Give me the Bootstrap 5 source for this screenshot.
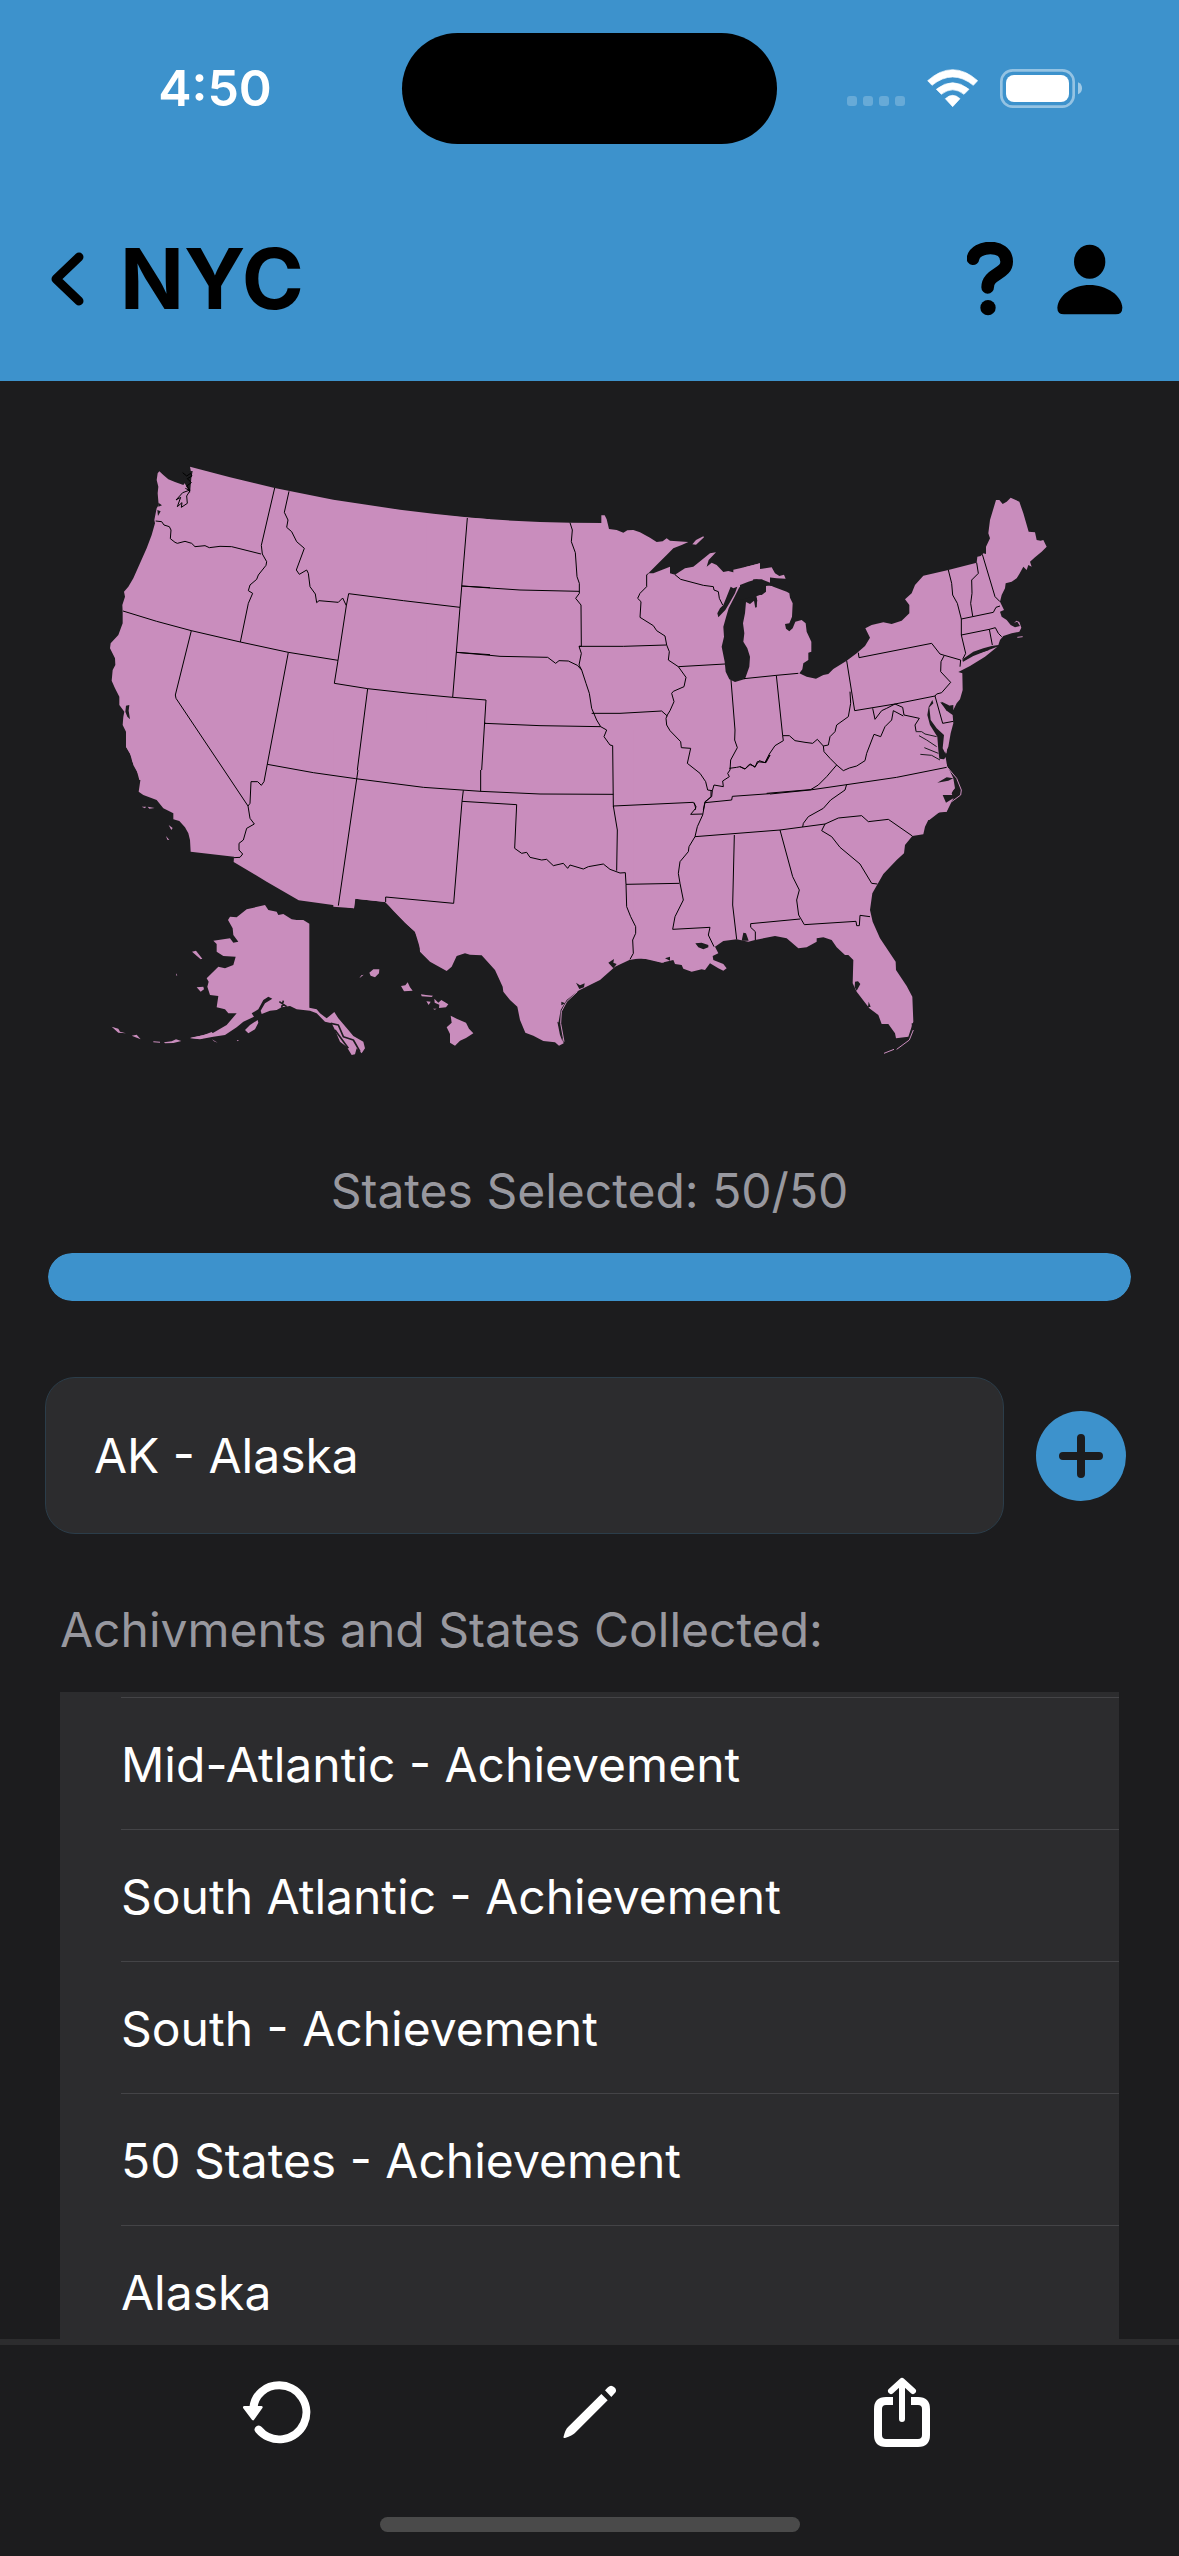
<!DOCTYPE html>
<html lang="en">
<head>
<meta charset="utf-8">
<meta name="viewport" content="width=device-width, initial-scale=1">
<title>NYC</title>
<link href="https://cdn.jsdelivr.net/npm/bootstrap@5.3.0/dist/css/bootstrap.min.css" rel="stylesheet">
<script src="https://cdn.jsdelivr.net/npm/bootstrap@5.3.0/dist/js/bootstrap.bundle.min.js"></script>
<style>
  :root { --sky: #3d92cc; --ink: #1c1c1e; --panel: #2c2c2e; --dim: #98989f; --state: #c98dbd; }
  body { background: var(--ink); color: #fff; font-family: Inter, Roboto, sans-serif; font-size: 48px; line-height: 60px; }
  .app-head { background: var(--sky); }
  .status-row { height: 176px; }
  .status-side { flex: 1 1 0; padding: 0 28px; }
  .status-icons { gap: 22px; padding-left: 0; }
  .clock-side { padding-right: 0; }
  .clock { font-size: 50px; font-weight: 600; }
  .island { width: 375px; height: 111px; border-radius: 56px; background: #000; }
  .title-row { height: 205px; padding: 0 56px 0 48px; color: #000; }
  .title-row h1 { font-size: 84px; line-height: 100px; font-weight: 700; margin: 0 auto 0 36px; }
  .title-tools { gap: 44px; }
  .title-row .btn, .tool-row .btn, .add-btn { --bs-btn-padding-x: 0; --bs-btn-padding-y: 0; border: 0; line-height: 1; }
  .dim-text { color: var(--dim); }
  .count-bar { height: 48px; margin: 32px 48px 76px; border-radius: 24px; background: var(--panel); }
  .count-bar .progress-bar { background: var(--sky); border-radius: 24px; }
  .pick-row { padding: 0 53px 0 45px; gap: 32px; }
  .pick-box.form-control { height: 157px; padding: 0 48px; font-size: 48px; line-height: 60px; color: #fff; background: var(--panel); border: 1px solid #2b3d4a; border-radius: 30px; }
  .list-label { margin: 66px 60px 32px; font-size: 48px; line-height: 60px; font-weight: 400; }
  .scroll-main { min-height: 0; }
  .got-list { margin: 0 60px; padding: 5px 0 0 61px; background: var(--panel); border-radius: 0; min-height: 0; --bs-list-group-bg: var(--panel); --bs-list-group-color: #fff; }
  .got-list .list-group-item { flex: none; height: 132px; padding: 2px 0 0; border: 0; border-top: 1px solid #444447; border-radius: 0; display: flex; align-items: center; }
  .tool-row { border-top: 6px solid var(--panel); height: 217px; }
  .tool-btns { padding: 31px 120px 0; }
  .home-bar { width: 420px; height: 15px; border-radius: 8px; background: #4a4a4a; margin-bottom: 24px; }
  .us-map { display: block; width: 100%; height: auto; }
  .us-map .land { fill: var(--state); }
  .us-map .water { fill: var(--ink); }
  .us-map .edge { fill: none; stroke: #000; stroke-width: 3; stroke-linejoin: round; }
  .us-map .inlet { fill: none; stroke: var(--ink); stroke-width: 5; stroke-linejoin: round; }
  .us-map .reef { fill: none; stroke: var(--state); stroke-width: 3; }
</style>
</head>
<body class="d-flex flex-column vh-100 overflow-hidden">

<header class="app-head flex-shrink-0">
  <div class="status-row d-flex align-items-center">
    <div class="status-side clock-side text-center"><span class="clock">4:50</span></div>
    <div class="island"></div>
    <div class="status-side status-icons d-flex align-items-center justify-content-center">
      <svg width="58" height="39" fill="#fff" fill-opacity=".22"><rect y="27" width="10" height="10" rx="3"/><rect x="16" y="27" width="10" height="10" rx="3"/><rect x="32" y="27" width="10" height="10" rx="3"/><rect x="48" y="27" width="10" height="10" rx="3"/></svg>
      <svg width="51" height="39" viewBox="273 55 153 117" fill="#fff"><path d="M275 90Q350 24 425 90L412 104Q350 54 288 104ZM301 116Q350 76 399 116L384 131Q350 104 316 131ZM328 144Q350 124 372 144L350 168Z" stroke="#fff" stroke-width="2" stroke-linejoin="round"/></svg>
      <svg width="82" height="39" viewBox="492 54 246 117"><rect x="496" y="58" width="217" height="109" rx="34" fill="none" stroke="#fff" stroke-opacity=".45" stroke-width="8"/><rect x="510" y="72" width="189" height="81" rx="24" fill="#fff"/><path d="M726 94Q738 99 738 112T726 130Z" fill="#fff" fill-opacity=".5"/></svg>
    </div>
  </div>
  <div class="title-row d-flex align-items-center">
    <button class="btn" type="button" aria-label="Back"><svg width="36" height="56" fill="none" stroke="#000" stroke-width="9" stroke-linecap="round" stroke-linejoin="round"><path d="M31 6 8 28 31 50"/></svg></button>
    <h1>NYC</h1>
    <div class="title-tools d-flex align-items-center">
      <button class="btn" type="button" aria-label="Help"><svg width="46" height="74" viewBox="393 578 138 222"><path d="M411 628C416 588 512 580 512 637C512 676 455 672 455 714" fill="none" stroke="#000" stroke-width="38" stroke-linecap="round"/><circle cx="456" cy="775" r="23"/></svg></button>
      <button class="btn" type="button" aria-label="Profile"><svg width="66" height="74" viewBox="662 575 198 222"><ellipse cx="760" cy="634" rx="47" ry="51"/><path d="M663 772C665 735 710 704 760 704S856 735 858 772Q858 792 838 792H683Q663 792 663 772Z"/></svg></button>
    </div>
  </div>
</header>

<main class="scroll-main d-flex flex-column flex-fill">
  <svg class="us-map flex-shrink-0" viewBox="0 1143 3537 2340" role="img" aria-label="Map of the United States">
    <!-- land, region by region -->
    <g class="land">
      <path transform="translate(270 1320)" d="M300 80 420 112 554 144 730 179 830 194 930 209 1030 221 1130 232 1200 238V1020H148L140 990 127 965 120 940 108 920 110 905 122 895 120 880 108 875 98 855 100 830 103 815 88 795 88 770 75 745 65 722 68 690 76 675 75 655 60 625 62 610 85 585 98 550 98 515 97 495 105 470 102 455 115 440 130 415 150 370 170 325 185 285 195 250 193 240 200 205 206 195 203 160 205 140 200 120 203 100 208 94 220 105 235 118 255 126 280 135 290 122 298 110 303 96Z"/>
      <path transform="translate(1320 1440)" d="M-40 102 83 113 200 121 300 126 390 128 484 129V106L494 106 500 118 507 147 530 150 550 158 562 151 580 150 600 157 630 173 650 186 668 184 680 175 690 182 745 186 725 195 700 205 680 225 655 250 625 280 640 280 690 260 690 280 705 284 735 265 760 260 785 240 810 220 828 217 806 240 800 260 815 248 830 255 850 276 865 273 885 278 915 262 960 250 960 268 990 266V1010H-40Z"/>
      <path d="M757 193 768 180 790 169 792 172 768 194Z" transform="translate(1320 1440)"/>
      <path transform="translate(2220 1410)" d="M-20 299 0 295 40 285 60 280 60 297 95 292 105 310 118 318 132 314 137 326 110 325 85 322 78 340 100 350 140 365 148 370 150 383 158 400 156 440 148 460 135 462 138 476 148 484 158 475 166 455 185 450 197 460 200 485 214 515 214 545 205 548 205 570 190 580 187 598 178 610 200 620 228 626 250 615 265 612 280 597 320 572 350 550 375 528 390 503 376 475 395 465 430 457 455 462 485 452 508 430 508 405 495 388 515 370 525 345 550 317 625 300 710 278 712 260 722 258 730 250 738 252 738 230 750 205 745 190 750 150 768 90 778 90 788 102 800 95 812 83 838 95 850 130 866 185 885 187 890 210 902 212 910 210 920 230 905 245 885 262 870 275 875 290 865 285 860 300 850 290 838 312 830 325 815 335 797 340 795 355 785 375 780 395 792 420 780 425 785 440 800 450 812 465 825 472 840 468 832 455 822 458 830 452 838 456 844 473 838 485 815 490 790 498 780 510 775 525 755 528 730 535 700 545 672 565 668 576 700 558 740 542 772 530 735 560 690 588 655 606 667 610 668 660 660 688 650 700 640 720 625 705 605 695 604 700 612 708 620 722 638 735 640 760 632 790 625 830 615 850 612 865 622 890 640 920 646 945 635 970 640 985 620 1025 600 1025 568 1050H-20Z"/>
      <path transform="translate(270 2220)" d="M108-60V20L125 50 130 75 152 115 146 155 160 165 200 180 220 205 250 220 250 238 268 243 285 262 295 280 300 300 302 335 432 350 431 366 530 425 626 481 745 497 792 505 796 476 885 486 910 510 950 552 975 575 990 625V-60Z"/>
      <path transform="translate(1020 2220)" d="M45 476 137 486 160 512 195 548 225 575 238 605 240 635 270 665 320 693 335 680 350 648 375 640 390 644 425 646 465 690 488 740 490 755 510 780 532 800 540 840 556 878 580 887 610 903 645 907 657 917 671 910 662 880 655 850 662 810 680 780 715 752 780 720 825 680 868 660 905 654 930 660 965 668 1000 660V-30H-20V500L42 505Z"/>
      <path transform="translate(1920 2220)" d="M-20 655 30 658 70 668 80 655 100 660 105 672 125 675 130 686 155 695 185 688 195 690 210 670 235 685 250 692 260 685 250 672 220 660 218 648 235 640 225 620 250 603 290 598 325 605 345 600 405 588 440 595 475 625 500 622 530 605 530 595 550 592 575 600 590 622 615 645 625 645 640 660 638 730 650 755 688 805 715 825 725 852 745 852 765 880 768 895 805 890 820 845 817 770 800 738 768 690 767 665 720 595 698 545 690 510 697 460 730 402 770 360 792 340 795 315 817 288 850 283 855 260 865 240 890 218 920 215 925 195 940 175 930 162 945 145 945 125 922 82 915 40V-30H-20Z"/>
      <!-- Alaska -->
      <path transform="translate(270 2220)" d="M658 551V803L680 808 690 820 710 835 733 816 745 835 775 870 790 888 820 905 825 925 815 940 800 925 795 943 785 945 770 920 750 905 735 870 725 850 705 845 680 820 660 812 620 808 600 798 575 802 560 810 540 812 515 822 512 812 525 790 547 776 535 770 520 780 505 808 485 820 492 830 460 845 440 862 405 885 370 890 330 898 300 895 340 885 370 878 410 855 440 820 415 820 405 808 380 802 385 768 360 765 352 740 356 725 350 715 385 680 405 685 430 675 437 650 400 648 380 635 380 612 370 602 420 595 430 608 445 605 430 585 428 565 414 540 420 530 440 532 470 508 525 495 535 510 560 515 565 525 580 522 605 538 620 540 640 540Z"/>
      <path transform="translate(270 2220)" d="M465 870 480 855 503 840 505 848 495 868 475 880ZM320 742 340 740 342 748 332 755ZM306 635 318 632 337 656 332 658ZM65 860 85 866 90 875 108 880 85 878ZM125 887 140 884 152 898ZM190 904 210 905 210 908 190 907ZM222 907 245 904 258 898 274 903 250 909 225 910ZM300 893 340 886 365 876 372 884 330 897ZM366 898 383 908 372 904ZM440 900 446 900 444 904ZM258 700 262 707 258 706ZM155 200 168 200 165 205ZM173 200 194 204 178 206ZM236 255 248 264 244 270ZM228 288 238 300 232 299Z"/>
      <!-- Hawaii -->
      <path transform="translate(1020 2220)" d="M88 698 100 688 118 688 117 700 105 712 92 707ZM58 715 64 706 71 704ZM183 738 196 736 203 727 210 742 218 752 192 754ZM243 763 258 765 279 767 275 771 245 769ZM283 776 295 788 304 780 325 793 318 802 297 804 298 794 284 788ZM259 784 272 785 266 795ZM279 806 290 806 284 809ZM332 827 350 836 378 848 387 866 400 880 378 894 360 902 345 917 330 908 330 882 320 862 335 848Z"/>
    </g>
    <!-- lakes, bays and sounds -->
    <g class="water">
      <path transform="translate(1320 1440)" d="M885 606 868 598 857 575 854 545 845 500 852 470 850 440 858 412 866 385 885 348 898 322 935 312 940 298 965 298 1000 312 978 318 978 335 965 345 948 343 952 362 946 385 942 362 930 372 918 366 915 400 909 430 913 460 910 485 922 505 930 530 928 560 915 597Z"/>
      <path transform="translate(1320 1440)" d="M835 412 832 400 840 385 850 375 860 350 872 320 880 325 892 320 885 340 868 370 856 390Z"/>
      <path transform="translate(2220 1410)" d="M0 345 25 335 50 328 78 338 100 344 95 348 70 345 65 352 68 372 45 380 20 385 0 390ZM577 690 580 700 568 712 572 750 590 775 612 795 608 835 620 858 612 868 598 866 595 840 592 800 570 765 562 735 566 710ZM600 695 620 708 640 705 640 722 620 722ZM592 938 620 922 640 925 625 932ZM608 975 650 975 640 985 618 998ZM620 880 655 930 660 970 645 955 640 925Z"/>
      <path transform="translate(270 1320)" d="M108 797 118 795 116 812 120 838 112 830 106 815ZM205 188 216 196 205 200ZM202 210 212 214 204 228ZM278 95 308 93 304 115 300 160 284 130Z"/>
      <path transform="translate(1020 2220)" d="M805 668 822 657 820 668 830 672 820 685ZM708 728 720 736 734 730 732 742 718 747ZM664 785 676 790 664 796ZM975 655 990 650 990 662ZM652 845 660 850 668 905 660 885Z"/>
      <path transform="translate(1920 2220)" d="M166 610 185 608 205 615 205 622 190 628 175 622ZM305 602 310 578 318 580 326 602ZM645 725 654 724 661 732 650 752 644 742ZM686 785 692 800 684 802ZM815 850 820 850 816 870Z"/>
    </g>
    <g class="inlet">
      <path transform="translate(2220 1410)" d="M527 785 545 785 555 792 590 800M537 797 560 810 590 830M553 833 595 850M541 853 575 856 600 870" stroke-width="3"/>
      <path transform="translate(270 2220)" d="M722 850 745 855 760 890 790 900 810 935M735 870 775 925M568 785 590 800M580 782 575 803"/>
      <path transform="translate(2220 1410)" d="M668 572 700 552 745 538M48 385V412"/>
    </g>
    <!-- barrier islands and keys -->
    <g class="reef">
      <path transform="translate(1920 2220)" d="M922 82 950 115 964 150 962 165 935 185M820 870 808 900 770 928M762 928 732 940"/>
      <path transform="translate(1020 2220)" d="M712 755 680 785 664 815 662 850 672 905"/>
      <path transform="translate(2220 1410)" d="M628 785 618 850M832 502 848 500"/>
    </g>
    <!-- state borders -->
    <g class="edge">
      <path transform="translate(270 1320)" d="M197 243 215 245 222 255 238 260 243 270 241 296 255 307 262 310 285 304 305 310 315 320 345 317 358 323 390 319 425 320 513 342M554 144 514 316 517 342 530 365 528 376 505 405 500 418 480 435 475 452 488 460 475 490 451 606M597 154 583 217 594 240 590 262 605 275 620 305 643 325 619 390 628 403 650 390 655 400 660 440 676 462 680 488 687 482 745 487 758 474 769 497M769 497 776 461 940 482 1110 502M1132 234 1110 502 1088 772M1115 438 1200 443M1099 637 1200 644M769 497 744 661 733 730 833 746 960 760 1088 772 1188 780M99 513 200 544 304 572 451 606 595 637 744 661M304 572 256 765 258 775 402 990M595 637 532 972M833 746 802 990M1188 780 1175 990"/>
      <path transform="translate(270 1320)" d="M278 98 290 108 302 100 306 108 292 116 304 128 290 138 300 150 278 158 258 180 272 172 262 200 276 188 274 202 292 190 290 168 300 152 286 145"/>
      <path transform="translate(1320 1440)" d="M390 128 397 150 394 185 406 218 411 290 418 310 418 340 407 355 423 375 424 499M150 324 240 330 418 334M150 526 180 529 323 532 347 550 357 542 385 543 412 556 425 570M424 499H417L424 520 417 555 425 570 438 610 448 640 455 685 470 720 482 740 500 750 492 770 510 795 518 797 520 980M417 499 550 499 678 495M625 280 620 285V320L600 340 593 355 603 365 600 412 640 437 650 452 675 468 680 495 688 515 685 540 715 560 738 592 732 620 700 634 695 640 702 665 690 692 682 705 678 715 680 735 690 752 722 785 724 803 752 805 742 850 780 880 797 905 803 930 817 932M715 560 855 552M705 284 722 298 790 316 820 320 822 330 835 335 838 355 848 375M873 600 885 750 884 780 892 803 872 840 870 870 863 880 868 890 848 903 850 920 822 915 817 932M912 596 990 588M134 730 300 737 482 740M455 700H540L665 693 682 708M520 978 760 967 768 980 765 990M868 865 890 862 900 860 915 867 932 852 945 862 952 845 978 848 990 825M795 968 875 960 877 949 990 941M817 932 815 950 795 965 790 990"/>
      <path transform="translate(2220 1410)" d="M90 618 109 616 175 610M109 616 128 797M75 878 88 852 105 827 130 812 128 797 148 797 165 812 195 817 218 820 232 808 250 828 265 825 270 800 285 785 290 765 325 740 332 700 330 665M320 572 344 722 465 702 585 678M355 548 357 563 575 520 600 552 613 556 603 575 602 605 632 637 605 668 590 672 585 678M613 556 662 570 660 590M585 678 608 760 640 754M625 300 635 340 638 375 652 400 664 447V495L677 550 668 568M710 278 715 310 695 330 696 370 692 400 698 438M727 253 765 380 780 395M664 447 760 427 768 412 780 408M664 495 748 478 766 473 775 490 785 500M748 478 757 525M250 828 252 845 270 865 290 885 310 902 328 894 350 888 375 872 380 850 402 793 422 800 435 770 455 750 460 722 490 738M398 715 405 748 425 722 440 715 465 702 488 712 492 735 538 745 525 765 528 783M290 885 260 920 235 945 210 960M90 972 210 960 320 944 470 922 620 892M90 855 75 878 58 872 45 890 28 883 15 897 0 890"/>
      <path transform="translate(270 2220)" d="M402 90 474 198 480 235 493 252 470 265 460 300 447 310 447 330 458 342 450 352 432 353M532 72 522 125 514 136 503 125H483L480 190 474 198M532 73 670 98 797 116M804 90 745 497"/>
      <path transform="translate(1020 2220)" d="M47 116 250 142 422 154 600 162 820 163M370 151 366 184 341 490 137 471V486M366 184 530 194 524 325 545 340 560 337 570 352 605 360 620 358 640 377 670 370 683 385 690 375 730 387 745 380 790 372 810 388 840 399 856 398 858 433 860 500 872 530 887 560V580L878 600 880 640 870 658M820 198 832 270 830 392"/>
      <path transform="translate(1920 2220)" d="M163 188 167 205 152 223 188 222M213 152 213 170 195 187 188 225 172 260 165 290 147 320 145 335 120 365 115 400 120 430 130 480 105 530 98 568 210 562 205 585 222 620M-42 433 118 430M165 290 420 270 555 252 595 234 665 227 685 245 745 238 817 288M620 133 615 150 572 180 550 205 505 230 490 250 488 261M283 285 278 495 290 598M420 270 458 410 478 450 470 480 476 525 493 554 648 544 650 557 658 557 660 526 690 530M480 537 332 551V562L346 575V600M555 252 545 272 575 290 600 322 660 372 695 430 712 432M380 160 510 149"/>
      <path d="M1385 1758 1470 1764M1369 1957 1470 1966M1442 2310 1442 2375M1458 2170H1454"/>
    </g>
  </svg>

  <p class="dim-text text-center m-0" id="count-text">States Selected: 50/50</p>
  <div class="progress count-bar flex-shrink-0" role="progressbar" aria-labelledby="count-text" aria-valuenow="50" aria-valuemin="0" aria-valuemax="50">
    <div class="progress-bar" style="width:100%"></div>
  </div>

  <form class="pick-row d-flex align-items-center flex-shrink-0">
    <input class="form-control pick-box" type="text" value="AK - Alaska" aria-label="State">
    <button class="btn add-btn flex-shrink-0" type="button" aria-label="Add state"><svg class="d-block" width="90" height="90"><circle cx="45" cy="45" r="45" fill="#3d92cc"/><path d="M45 27V63M27 45H63" stroke="#1c1c1e" stroke-width="8" stroke-linecap="round"/></svg></button>
  </form>

  <h2 class="dim-text list-label">Achivments and States Collected:</h2>
  <ul class="list-group got-list flex-fill overflow-hidden">
    <li class="list-group-item">Mid-Atlantic - Achievement</li>
    <li class="list-group-item">South Atlantic - Achievement</li>
    <li class="list-group-item">South - Achievement</li>
    <li class="list-group-item">50 States - Achievement</li>
    <li class="list-group-item">Alaska</li>
  </ul>
</main>

<footer class="tool-row d-flex flex-column flex-shrink-0 align-items-center justify-content-between">
  <div class="tool-btns d-flex w-100">
    <div class="flex-fill w-100 text-center"><button class="btn" type="button" aria-label="Reset"><svg class="d-block" width="68" height="72" viewBox="37 32 204 216"><path d="M68 128C72 88 104 60 146 60A81 81 0 1 1 84 193" fill="none" stroke="#fff" stroke-width="24" stroke-linecap="round"/><path d="M41 126H92L67 161Z" fill="#fff" stroke="#fff" stroke-width="8" stroke-linejoin="round"/></svg></button></div>
    <div class="flex-fill w-100 text-center"><button class="btn" type="button" aria-label="Edit"><svg class="d-block" width="54" height="72" viewBox="1001 32 162 216" fill="#fff"><path d="M1116 86 1135 105 1036 204Q1030 210 1007 218Q1001 219 1003 213Q1008 192 1017 184ZM1127 75 1136 66Q1145 57 1155 66T1156 84L1146 95Z"/></svg></button></div>
    <div class="flex-fill w-100 text-center"><button class="btn" type="button" aria-label="Share"><svg class="d-block" width="58" height="72" fill="none" stroke="#fff" stroke-width="8" stroke-linecap="round" stroke-linejoin="round"><path d="M19 25H12Q4 25 4 33V59Q4 67 12 67H44Q52 67 52 59V33Q52 25 44 25H37" stroke-linecap="butt"/><path d="M28 43V6M17 15 28 5 39 15" stroke-width="6"/></svg></button></div>
  </div>
  <div class="home-bar"></div>
</footer>
</body>
</html>
